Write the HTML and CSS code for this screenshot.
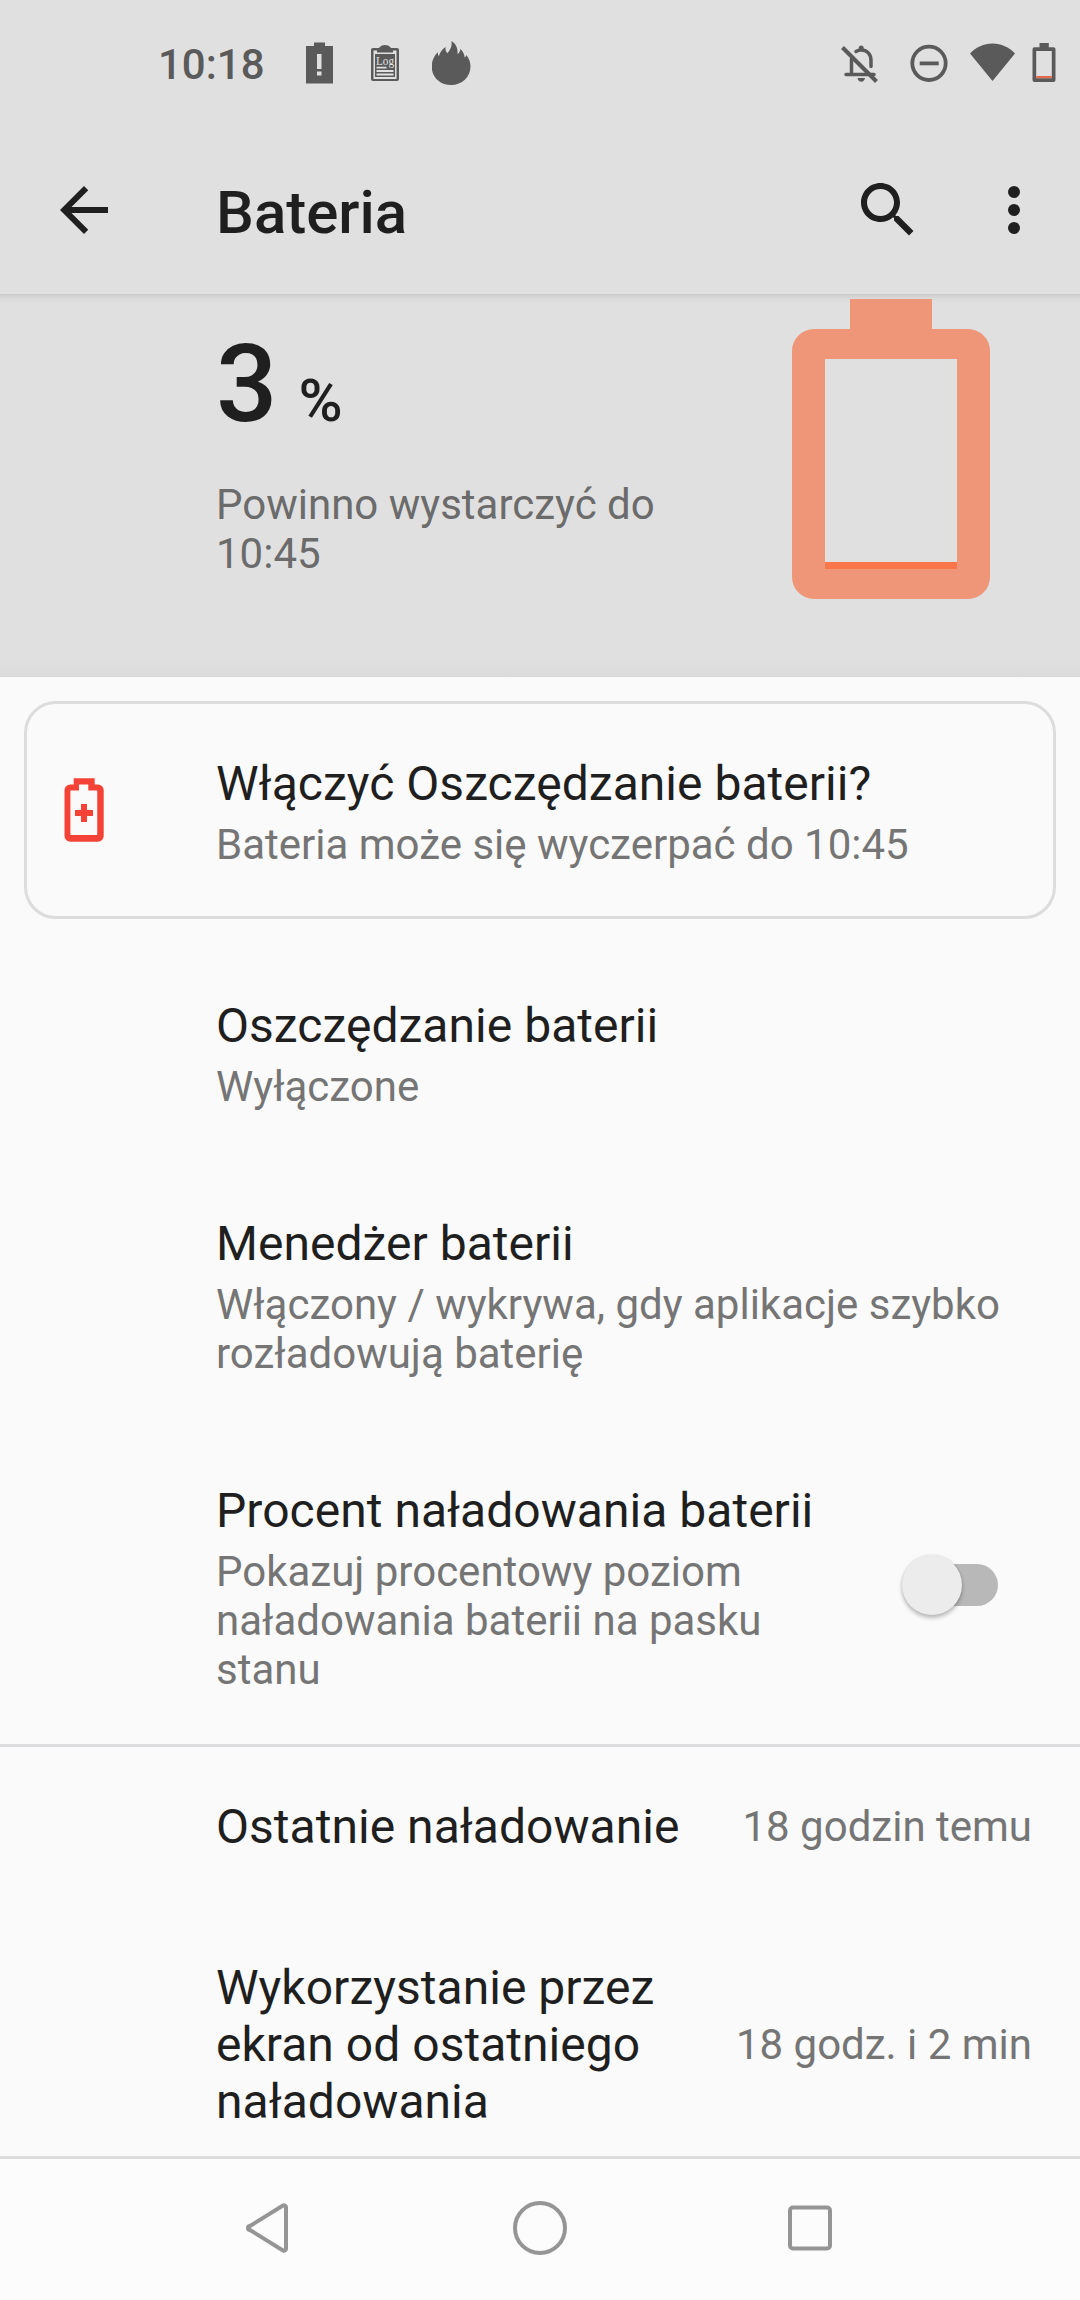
FILE: index.html
```html
<!DOCTYPE html>
<html lang="pl">
<head>
<meta charset="utf-8">
<title>Bateria</title>
<link rel="stylesheet" href="styles.css">
</head>
<body>
<div class="screen">
  <header class="top">
    <div class="status">
      <span class="clock">10:18</span>
      <svg class="st-alert" width="28" height="60" viewBox="305 33 28 60"><path fill-rule="evenodd" d="M306 46h8v-3.500h11V46h8v37.500h-27zM317 54v15h4.500V54zM317 71.500v4h4.500v-4z"/></svg>
      <svg class="st-log" width="28" height="60" viewBox="371 33 28 60">
        <rect x="371" y="48" width="28" height="33" rx="2"/>
        <path d="M379 48q2-3 6-3t6 3v4h-12z"/>
        <path class="paper" d="M373.500 50.500h3.500v2h16v-2h3.500v28.500h-23z"/>
        <rect x="375" y="54" width="20" height="23"/>
        <path class="lines" d="M376.500 67.700h10M376.500 71h17M376.500 74.500h17"/>
        <text class="log-text" x="376" y="65" textLength="18" lengthAdjust="spacingAndGlyphs">Log</text>
      </svg>
      <svg class="st-fire" width="39" height="60" viewBox="432 33 39 60"><path d="M451 85c-11 0-19.300-8-19.300-18.500 0-5 2-10.500 6.300-14.500-.4 1.700 0 3 .9 4.200.9-3.600 3.300-7 6.800-9.200-.6 2.500 0 4.600 1.800 6.200 1.700-2.700 5-5.700 3.900-12.200 4 2.500 6.600 6 6.200 13.200 1.500-1.200 2.600-2.900 2.900-5.200 2.700 2.700 3.900 5.500 4.200 8.500.9-.6 1.500-1.500 1.700-2.500 2.700 3.300 4.100 7.500 4.100 11.500C470.500 77 462 85 451 85z"/></svg>
      <div class="st-right">
        <svg width="40" height="60" viewBox="840 33 40 60">
          <g class="bell"><path d="M856 51.500c2-1.300 3-1.500 5.200-1.500 5.800 0 9.800 4.200 9.800 10.500v6M851.500 59v15.500M846 74.500h28"/></g>
          <path d="M857.500 78h7.500q-.8 3.800-3.750 3.800t-3.750-3.800zM858.700 50v-2q0-2.600 2.500-2.600t2.500 2.600v2z"/>
          <path class="slash" d="M842.500 47.500l34 34"/>
        </svg>
        <svg class="st-dnd" width="38" height="60" viewBox="910.300 33 38 60"><circle class="ring" cx="929.300" cy="63.300" r="16.700"/><path d="M920 61.500h19v3.800h-19z"/></svg>
        <svg class="st-wifi" width="45" height="60" viewBox="970 33 45 60"><path d="M992.500 81L970 53.500c6-6.300 13.700-10 22.500-10s16.500 3.700 22.500 10z"/></svg>
        <svg class="st-batt" width="24" height="60" viewBox="1032.500 33 24 60"><path fill-rule="evenodd" d="M1040 43h9.300v4.200h4.700q2 0 2 2V80q0 2-2 2h-19q-2 0-2-2V49.200q0-2 2-2h5zM1036.700 51v27.200h15.600V51z"/><path class="low" d="M1036.700 76h15.600v2.200h-15.600z"/></svg>
      </div>
    </div>
    <div class="appbar">
      <svg class="icon" viewBox="0 0 24 24"><path d="M20 11H7.830l5.590-5.590L12 4l-8 8 8 8 1.410-1.410L7.830 13H20v-2z"/></svg>
      <h1>Bateria</h1>
      <svg class="icon" viewBox="0 0 24 24"><path d="M15.500 14h-.79l-.28-.27C15.410 12.590 16 11.110 16 9.500 16 5.910 13.090 3 9.500 3S3 5.910 3 9.500 5.910 16 9.500 16c1.610 0 3.090-.59 4.230-1.570l.27.28v.79l5 4.990L20.490 19l-4.990-5zm-6 0C7.010 14 5 11.990 5 9.500S7.010 5 9.500 5 14 7.010 14 9.500 11.990 14 9.500 14z"/></svg>
      <svg class="icon more" viewBox="0 0 24 24"><circle cx="12" cy="6" r="2"/><circle cx="12" cy="12" r="2"/><circle cx="12" cy="18" r="2"/></svg>
    </div>
  </header>

  <section class="summary">
    <div class="level">
      <div class="percent">3<span class="unit">%</span></div>
      <p class="sub estimate">Powinno wystarczyć do 10:45</p>
    </div>
    <svg class="big-battery" width="198" height="300" viewBox="0 0 198 300"><path class="shell" fill-rule="evenodd" d="M58 0h82v30h36a22 22 0 0 1 22 22v226a22 22 0 0 1-22 22H22a22 22 0 0 1-22-22V52a22 22 0 0 1 22-22h36zM33 60v210h132V60z"/><path class="charge" d="M33 263h132v7H33z"/></svg>
  </section>

  <main>
    <section class="card">
      <svg class="tip-icon" width="72" height="72" viewBox="48 774 72 72"><path fill-rule="evenodd" d="M73.700 778.300h21v6.200H98a5.700 5.700 0 0 1 5.700 5.700V836a5.700 5.700 0 0 1-5.700 5.700H70.200a5.700 5.700 0 0 1-5.700-5.700v-45.800a5.700 5.700 0 0 1 5.700-5.700h3.500zM79 784.500v6h-8.600V835h26.800v-44.500h-8.900v-6zM81 804h6v6h6v6h-6v6h-6v-6h-6v-6h6z"/></svg>
      <div class="text">
        <h2>Włączyć Oszczędzanie baterii?</h2>
        <p class="sub">Bateria może się wyczerpać do 10:45</p>
      </div>
    </section>
    <section class="row">
      <h2>Oszczędzanie baterii</h2>
      <p class="sub">Wyłączone</p>
    </section>
    <section class="row">
      <h2>Menedżer baterii</h2>
      <p class="sub">Włączony / wykrywa, gdy aplikacje szybko rozładowują baterię</p>
    </section>
    <section class="row row-switch">
      <div class="text">
        <h2>Procent naładowania baterii</h2>
        <p class="sub">Pokazuj procentowy poziom naładowania baterii na pasku stanu</p>
      </div>
      <div class="switch"><div class="thumb"></div></div>
    </section>
    <section class="row row-value">
      <h2>Ostatnie naładowanie</h2>
      <span class="sub">18 godzin temu</span>
    </section>
    <section class="row row-value">
      <h2>Wykorzystanie przez ekran od ostatniego naładowania</h2>
      <span class="sub">18 godz. i 2 min</span>
    </section>
  </main>

  <nav>
    <svg width="60" height="60" viewBox="240 2198 60 60"><path d="M286 2207v42a2 2 0 0 1-3 1.500L250 2230a2 2 0 0 1 0-4l33-20.500a2 2 0 0 1 3 1.500z"/></svg>
    <svg width="60" height="60" viewBox="510 2198 60 60"><circle cx="540" cy="2228" r="25"/></svg>
    <svg width="60" height="60" viewBox="780 2198 60 60"><rect x="790" y="2207.500" width="40" height="41" rx="3"/></svg>
  </nav>
</div>
</body>
</html>
```
FILE: styles.css
```css
* { box-sizing: border-box; }
body, h1, h2, p { margin: 0; }
body { background: #fafafa; font-family: Roboto, sans-serif; color: #1f1f1f; }
svg { display: block; flex: none; }

.screen { width: 1080px; height: 2300px; display: flex; flex-direction: column; overflow: hidden; }

.top { height: 294px; background: #e0e0e0; flex: none; }
.status { height: 126px; padding: 0 24px 0 158px; display: flex; align-items: center; fill: #5a5a5a; }
.clock { width: 147px; font-size: 42px; font-weight: 500; line-height: 50px; color: #5a5a5a; margin-top: 3px; }
.st-log { margin-left: 38px; }
.st-fire { margin-left: 33px; }
.paper, .lines, .bell, .slash, .ring { fill: none; stroke: #5a5a5a; }
.paper { fill: #e0e0e0; stroke: none; }
.lines { stroke: #e0e0e0; stroke-width: 1.800; }
.log-text { font: 12px "Liberation Serif", serif; fill: #e0e0e0; }
.bell { stroke-width: 3.500; stroke-linecap: round; }
.slash { stroke-width: 4; stroke-linecap: butt; }
.ring { stroke-width: 3.800; }
.low { fill: #e0694a; }
.st-right { margin-left: auto; display: flex; }
.st-dnd { margin-left: 30.300px; }
.st-wifi { margin-left: 21.700px; }
.st-batt { margin-left: 17.200px; }

.appbar { height: 168px; padding: 0 30px 0 48px; display: flex; align-items: center; fill: #1f1f1f; }
.icon { width: 72px; height: 72px; }
.more { margin-left: 54px; }
h1 { flex: 1; margin: 5px 0 0 96px; font-size: 60px; font-weight: 500; line-height: 70px; }

.summary { height: 383px; flex: none; padding: 5px 90px 0 216px; display: flex; justify-content: space-between; border-bottom: 1px solid #d9d9d9; background: linear-gradient(#cbcbcb, #d9d9d9 4px, #e0e0e0 10px, #e0e0e0 360px, #dcdcdc); }
.level { width: 460px; padding-top: 22px; }
.percent { height: 126px; font-size: 108px; font-weight: 500; line-height: 126px; }
.unit { font-size: 60px; margin-left: 21px; }
.estimate { margin-top: 33px; }
.shell { fill: #f09678; }
.charge { fill: #f8764a; }

main { flex: 1; min-height: 0; overflow: hidden; }
h2 { font-size: 48px; font-weight: 400; line-height: 57px; letter-spacing: .03px; }
.sub { font-size: 42px; line-height: 49px; color: #757575; }
h2 + p { margin-top: 8px; }
.summary .sub { color: #6b6b6b; }
.card { margin: 24px 24px 27px; height: 218px; padding: 51px 21px 0; border: 3px solid #dcdcdc; border-radius: 32px; display: flex; }
.tip-icon { margin-top: 19px; margin-right: 96px; fill: #f44336; }
.row { padding: 51px 48px 53px 216px; }
.row-switch { display: flex; justify-content: space-between; align-items: center; padding: 51px 82px 50px 216px; border-bottom: 3px solid #dcdcde; }
.row-switch .sub { width: 570px; }
.row-switch .text { width: 620px; }
.switch { width: 90px; height: 42px; margin-top: -6px; border-radius: 21px; background: #b8b8b8; display: flex; align-items: center; }
.thumb { width: 60px; height: 60px; flex: none; margin-left: -6px; border-radius: 50%; background: #ececec; box-shadow: 0 3px 4px rgba(0,0,0,.25), 0 0 3px rgba(0,0,0,.1); }
.row-value { display: flex; align-items: center; justify-content: space-between; }
.row-value h2 { max-width: 480px; }
.row-value .sub { white-space: nowrap; }

nav { height: 144px; flex: none; border-top: 3px solid #dcdcdc; background: #fcfcfc; padding: 39px 135px 0; display: grid; grid-template-columns: repeat(3, 270px); justify-items: center; fill: none; stroke: #959595; stroke-width: 4; }
```
